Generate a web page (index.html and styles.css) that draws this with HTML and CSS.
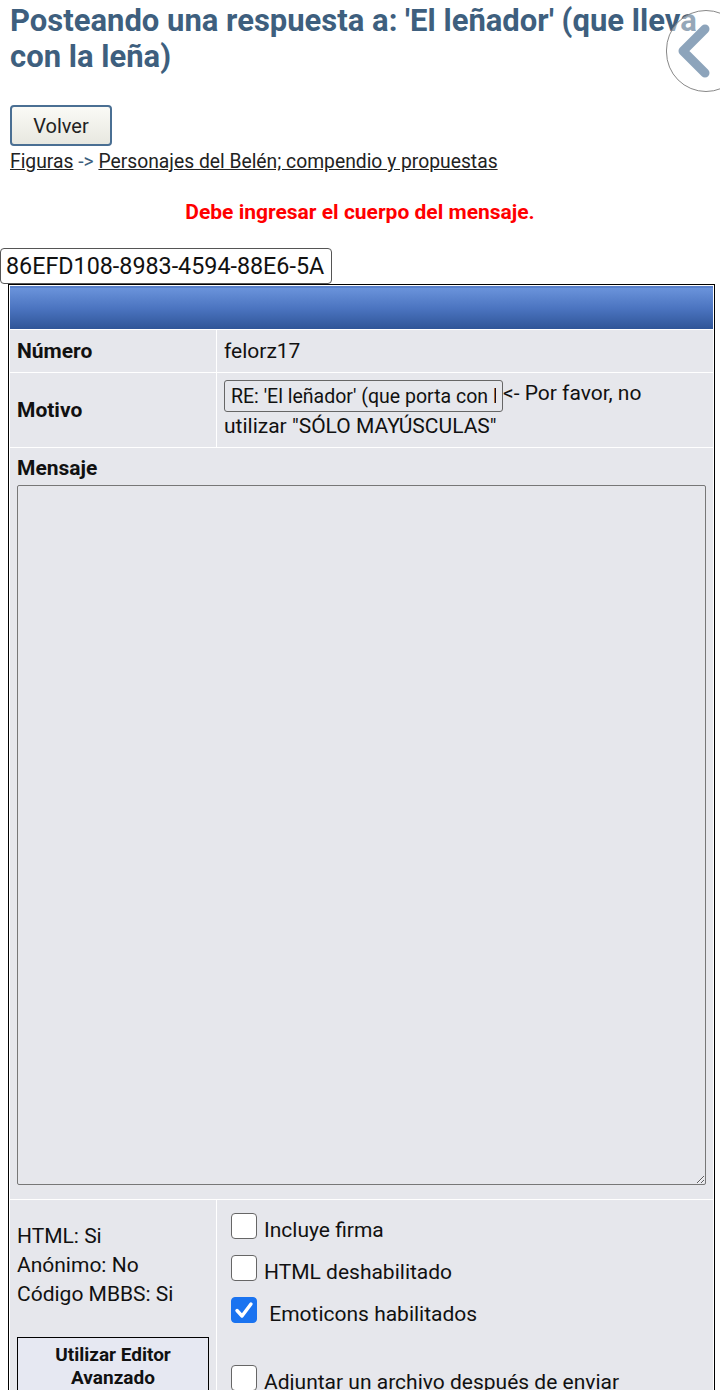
FILE: index.html
```html
<!DOCTYPE html>
<html lang="es">
<head>
  <meta charset="UTF-8">
  <meta name="viewport" content="width=device-width, initial-scale=1.0">
  <title>Posteando una respuesta</title>
  <link rel="stylesheet" href="styles.css">
</head>
<body>
  <h1 class="titulo">Posteando una respuesta a: 'El leñador' (que lleva con la leña)</h1>

  <a class="btn-atras" href="#" aria-label="Atrás">
    <svg width="40" height="56" viewBox="0 0 40 56">
      <path d="M32 6 L10 28 L32 50" fill="none" stroke="#8da4bb" stroke-width="9" stroke-linecap="round" stroke-linejoin="round"/>
    </svg>
  </a>

  <div class="volver-wrap">
    <button class="volver">Volver</button>
  </div>

  <div class="migas">
    <a href="#">Figuras</a> <span class="flecha">-&gt;</span> <a href="#">Personajes del Belén; compendio y propuestas</a>
  </div>

  <p class="error">Debe ingresar el cuerpo del mensaje.</p>

  <input class="guid" type="text" value="86EFD108-8983-4594-88E6-5A">

  <table class="form">
    <tr>
      <td class="cabecera" colspan="2"></td>
    </tr>
    <tr class="fila-num">
      <td class="etiqueta">Número</td>
      <td>felorz17</td>
    </tr>
    <tr>
      <td class="etiqueta">Motivo</td>
      <td class="motivo"><input class="asunto" type="text" value="RE: 'El leñador' (que porta con la leña)">&lt;- Por favor, no utilizar "SÓLO MAYÚSCULAS"</td>
    </tr>
    <tr>
      <td class="mensaje" colspan="2">
        <div class="etiqueta">Mensaje</div>
        <textarea class="cuerpo"></textarea>
      </td>
    </tr>
    <tr>
      <td class="info">
        <div>HTML: Si</div>
        <div>Anónimo: No</div>
        <div>Código MBBS: Si</div>
        <button class="editor">Utilizar Editor Avanzado</button>
      </td>
      <td class="opciones">
        <label class="opcion"><span class="caja"></span>Incluye firma</label>
        <label class="opcion"><span class="caja"></span>HTML deshabilitado</label>
        <label class="opcion"><span class="caja marcada">
          <svg width="26" height="26" viewBox="0 0 26 26"><path d="M6 13.5 L11 19 L20 7" fill="none" stroke="#fff" stroke-width="3.4" stroke-linecap="round" stroke-linejoin="round"/></svg>
        </span>&nbsp;Emoticons habilitados</label>
        <label class="opcion adjuntar"><span class="caja"></span>Adjuntar un archivo después de enviar</label>
      </td>
    </tr>
  </table>
</body>
</html>
```

FILE: styles.css
```css
body {
  font-family: Roboto, "Noto Sans", Arial, sans-serif;
  margin: 0;
  padding: 0;
  background-color: #fff;
  color: #111;
  position: relative;
  overflow: hidden;
}

.titulo {
  margin: 0;
  padding: 3px 10px 0 10px;
  font-size: 31px;
  line-height: 36px;
  color: #3e5f7e;
  font-weight: 700;
}

.btn-atras {
  position: absolute;
  top: 10px;
  left: 666px;
  width: 80px;
  height: 82px;
  border: 1px solid #888;
  border-radius: 42px;
  background: rgba(255, 255, 255, 0.45);
  display: flex;
  align-items: center;
  padding-left: 6px;
  box-sizing: border-box;
}

.volver-wrap {
  padding: 30px 10px 0 10px;
}

.volver {
  width: 102px;
  height: 41px;
  font-family: Roboto, Arial, sans-serif;
  font-size: 20px;
  color: #222;
  background: linear-gradient(#fafaf6, #e8e8e0);
  border: 2px solid #4a6f93;
  border-radius: 4px;
  padding: 0;
}

.migas {
  padding: 3px 10px 0 10px;
  font-size: 19.3px;
  line-height: 26px;
  color: #3e5f7e;
}

.migas a {
  color: #222;
  text-decoration: underline;
}

.error {
  margin: 0;
  padding-top: 24px;
  text-align: center;
  color: #f00;
  font-weight: 700;
  font-size: 21px;
  line-height: 26px;
}

.guid {
  display: block;
  margin: 23px 0 0 0;
  width: 332px;
  height: 36px;
  box-sizing: border-box;
  font-family: Roboto, sans-serif;
  font-size: 23.3px;
  padding: 0 5px;
  border: 1px solid #555;
  border-radius: 4px;
  color: #111;
}

.form {
  margin: 0 0 0 8px;
  width: 706px;
  border: 1px solid #000;
  border-spacing: 1px;
  background: #fff;
  font-size: 21px;
}

.form td {
  background: #e6e7ec;
  padding: 6px 7px;
  vertical-align: middle;
}

.form td.cabecera {
  height: 29px;
  background: linear-gradient(#6a93db, #4b74c0 50%, #2f5597);
  border-top: 2px solid #5a82cc;
}

.etiqueta {
  font-weight: 700;
  width: 191px;
}

.fila-num td {
  height: 30px;
  line-height: 26px;
}

.motivo {
  line-height: 29px;
  padding-top: 7px;
  padding-bottom: 12px;
}

.asunto {
  width: 279px;
  height: 32px;
  box-sizing: border-box;
  font-family: Roboto, sans-serif;
  font-size: 19.5px;
  padding: 0 6px;
  border: 1px solid #666;
  border-radius: 3px;
  background: #e6e7ec;
  color: #111;
  vertical-align: top;
  margin-top: 1px;
}

.form td.mensaje {
  padding: 8px 7px 14px 7px;
}

.mensaje .etiqueta {
  width: auto;
  line-height: 24px;
  margin-bottom: 5px;
}

.cuerpo {
  display: block;
  width: 689px;
  height: 700px;
  box-sizing: border-box;
  border: 1px solid #777;
  border-radius: 2px;
  background: #e6e7ec;
}

.form td.info {
  vertical-align: top;
  padding-top: 22px;
  line-height: 29px;
  font-size: 21px;
}

.editor {
  display: block;
  margin-top: 28px;
  width: 192px;
  height: 56px;
  border: 1px solid #000;
  background: #e6e8f2;
  font-family: Roboto, sans-serif;
  font-weight: 700;
  font-size: 19px;
  line-height: 23px;
  color: #111;
  padding: 2px 6px 0 6px;
  vertical-align: top;
}

.form td.opciones {
  vertical-align: top;
  padding: 13px 7px 0 14px;
}

.opcion {
  display: flex;
  align-items: flex-end;
  height: 42px;
  font-size: 21px;
  line-height: 22px;
}

.opcion:first-child {
  height: 28px;
}

.caja {
  width: 26px;
  height: 26px;
  box-sizing: border-box;
  border: 1.5px solid #666;
  border-radius: 4px;
  background: #fff;
  margin-right: 7px;
  margin-bottom: 2px;
  flex: none;
}

.caja.marcada {
  background: #1a73f0;
  border-color: #1a73f0;
  position: relative;
}

.caja.marcada svg {
  position: absolute;
  left: -1.5px;
  top: -1.5px;
}

.adjuntar {
  height: 68px;
  margin-bottom: 10px;
}
```
